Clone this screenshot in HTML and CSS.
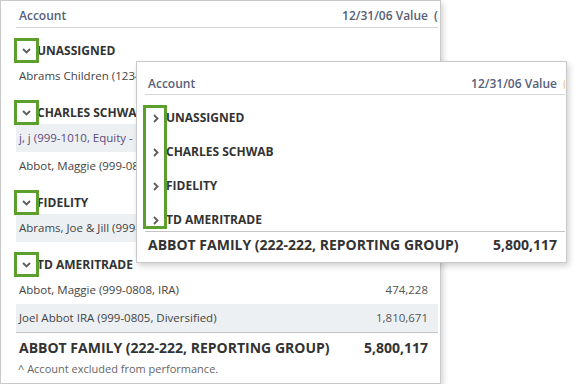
FILE: index.html
```html
<!DOCTYPE html>
<html lang="en">
<head>
    <meta charset="UTF-8">
    <meta name="viewport" content="width=device-width, initial-scale=1.0">
    <title>Account Groups</title>
    <link rel="stylesheet" href="styles.css">
</head>
<body>
    <div class="report back">
        <div class="clip">
            <div class="row head"><span class="name">Account</span><span class="val">12/31/06 Value</span><span class="extra">(</span></div>

            <div class="row group">
                <span class="name"><span class="toggle"><svg width="9" height="6" viewBox="0 0 9 6"><polyline points="1,1 4.5,4.5 8,1" /></svg><i class="mark"></i></span>UNASSIGNED</span>
            </div>
            <div class="row acct"><span class="name">Abrams Children (1234-5678, Balanced)</span><span class="val">612,340</span></div>

            <div class="row group">
                <span class="name"><span class="toggle"><svg width="9" height="6" viewBox="0 0 9 6"><polyline points="1,1 4.5,4.5 8,1" /></svg><i class="mark"></i></span>CHARLES SCHWAB</span>
            </div>
            <div class="row acct alt link"><span class="name">j, j (999-1010, Equity - Growth)</span><span class="val">905,112</span></div>
            <div class="row acct"><span class="name">Abbot, Maggie (999-0807, Income)</span><span class="val">1,203,488</span></div>

            <div class="row group">
                <span class="name"><span class="toggle"><svg width="9" height="6" viewBox="0 0 9 6"><polyline points="1,1 4.5,4.5 8,1" /></svg><i class="mark"></i></span>FIDELITY</span>
            </div>
            <div class="row acct alt"><span class="name">Abrams, Joe &amp; Jill (999-0901, Joint)</span><span class="val">794,278</span></div>

            <div class="row group">
                <span class="name"><span class="toggle"><svg width="9" height="6" viewBox="0 0 9 6"><polyline points="1,1 4.5,4.5 8,1" /></svg><i class="mark"></i></span>TD AMERITRADE</span>
            </div>
            <div class="row acct"><span class="name">Abbot, Maggie (999-0808, IRA)</span><span class="val">474,228</span></div>
            <div class="row acct alt"><span class="name">Joel Abbot IRA (999-0805, Diversified)</span><span class="val">1,810,671</span></div>

            <div class="row total"><span class="name">ABBOT FAMILY (222-222, REPORTING GROUP)</span><span class="val">5,800,117</span></div>
            <div class="note">^ Account excluded from performance.</div>
        </div>
    </div>

    <div class="report front">
        <div class="clip">
            <div class="row head"><span class="name">Account</span><span class="val">12/31/06 Value</span><span class="extra tan">(</span></div>
            <div class="row group"><span class="name"><span class="toggle"><svg width="6" height="9" viewBox="0 0 6 9"><polyline points="1,1 4.5,4.5 1,8" /></svg></span>UNASSIGNED</span></div>
            <div class="row group"><span class="name"><span class="toggle"><svg width="6" height="9" viewBox="0 0 6 9"><polyline points="1,1 4.5,4.5 1,8" /></svg></span>CHARLES SCHWAB</span></div>
            <div class="row group"><span class="name"><span class="toggle"><svg width="6" height="9" viewBox="0 0 6 9"><polyline points="1,1 4.5,4.5 1,8" /></svg></span>FIDELITY</span></div>
            <div class="row group"><span class="name"><span class="toggle"><svg width="6" height="9" viewBox="0 0 6 9"><polyline points="1,1 4.5,4.5 1,8" /></svg></span>TD AMERITRADE</span></div>
            <div class="row total"><span class="name">ABBOT FAMILY (222-222, REPORTING GROUP)</span><span class="val">5,800,117</span></div>
        </div>
        <div class="mark tall"></div>
    </div>
</body>
</html>
```

FILE: styles.css
```css
body {
    margin: 0;
    background-color: #fff;
    font-family: "Open Sans", "Noto Sans", Arial, sans-serif;
    color: #333;
}
.report {
    background-color: #fff;
    border: 1px solid #c9c9c9;
    box-shadow: 2px 3px 6px rgba(0, 0, 0, 0.18);
}
.report .clip {
    overflow: hidden;
}
.back {
    width: 439px;
    padding-bottom: 7px;
}
.back .clip {
    margin-right: 2px;
    padding-left: 15px;
}
.front {
    position: absolute;
    left: 136px;
    top: 61px;
    width: 429px;
    padding-bottom: 4px;
}
.front .clip {
    margin-right: 1px;
    padding-left: 8px;
}
.row {
    display: grid;
    grid-template-columns: 302px 110px 20px;
    width: 432px;
    line-height: 18px;
    white-space: nowrap;
}
.row .name {
    padding-left: 3px;
}
.row .val {
    text-align: right;
}
.row .extra {
    padding-left: 6px;
}
.head {
    padding: 6px 0 2px;
    border-bottom: 1px solid #d6d6d6;
    font-size: 12px;
    font-weight: 600;
    color: #566078;
}
.head .tan {
    color: #e3cfa6;
}
.front .head {
    padding-top: 13px;
    padding-bottom: 1px;
}
.group {
    padding: 14px 0 2px;
    font-size: 12px;
    font-weight: 700;
    color: #333;
}
.group .name {
    display: flex;
    align-items: center;
    padding-left: 0;
}
.toggle {
    position: relative;
    display: flex;
    align-items: center;
    justify-content: center;
    width: 21px;
    height: 18px;
}
.toggle svg {
    fill: none;
    stroke: #5f5f5f;
    stroke-width: 1.9;
}
.mark {
    position: absolute;
    box-sizing: border-box;
    border: 3px solid #5c9f2c;
}
.toggle .mark {
    left: -2px;
    top: -4px;
    width: 25px;
    height: 25px;
}
.mark.tall {
    left: 6px;
    top: 43px;
    width: 24px;
    height: 124px;
}
.acct {
    padding: 5px 0;
    font-size: 11.5px;
    color: #444;
}
.acct .val {
    color: #555;
}
.alt {
    background-color: #edf0f3;
}
.link .name {
    color: #5a4c80;
}
.total {
    padding: 6px 0 5px;
    border-top: 1px solid #c4c4c4;
    font-size: 14px;
    font-weight: 700;
    color: #333;
}
.front .total {
    padding: 4px 0;
}
.note {
    padding-left: 2px;
    line-height: 14px;
    font-size: 11px;
    color: #666;
}
```
